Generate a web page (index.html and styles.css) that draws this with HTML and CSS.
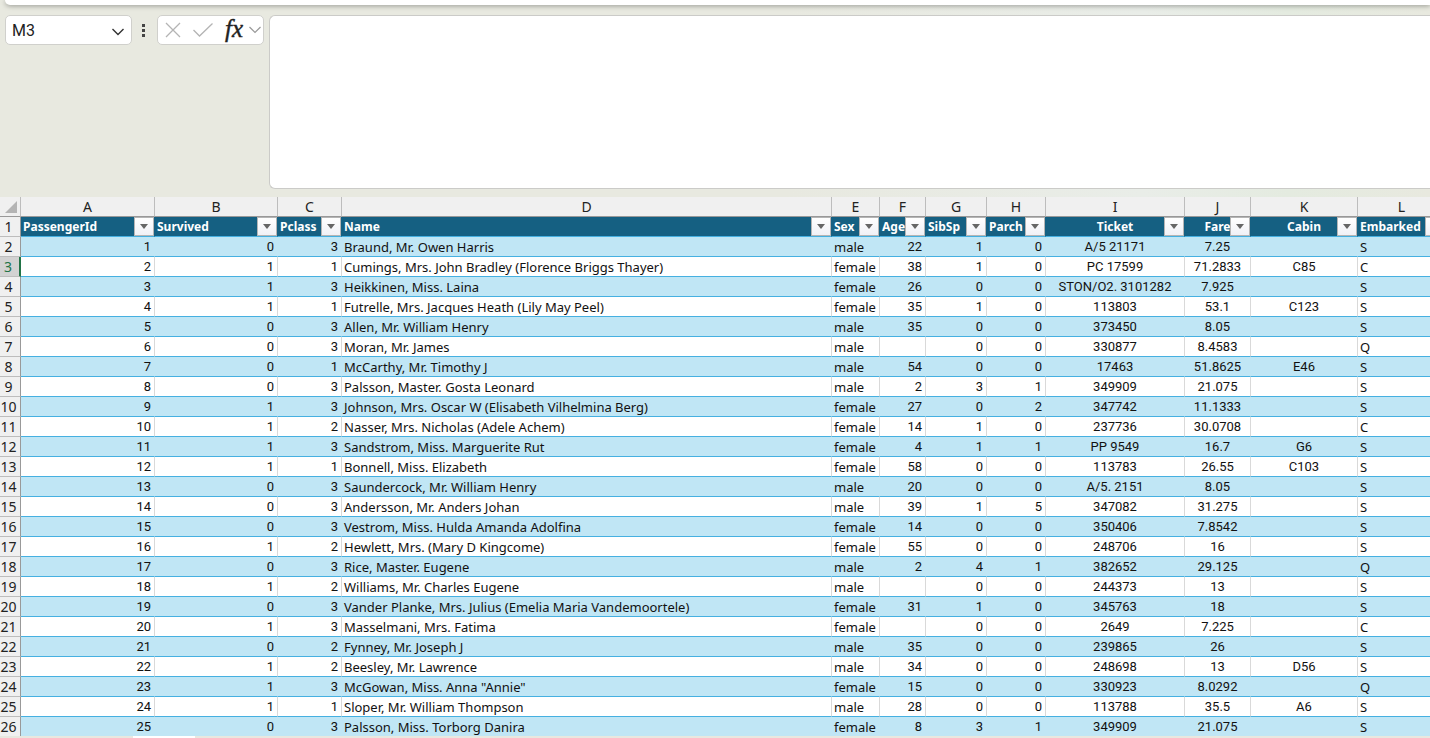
FILE: index.html
```html
<!DOCTYPE html>
<html lang="en">
<head>
<meta charset="utf-8">
<title>Passengers</title>
<link rel="stylesheet" href="styles.css">
</head>
<body>
<div class="ribbon"></div>
<header class="formula-bar">
  <div class="name-box">
    <input class="name-input" type="text" value="M3" aria-label="Name box">
    <button class="tool name-toggle" type="button" aria-label="Show names">
      <svg width="14" height="8" viewBox="0 0 14 8"><path d="M1.500 1 L7 6.500 L12.500 1" fill="none" stroke="#333" stroke-width="1.400"/></svg>
    </button>
  </div>
  <svg class="grip" width="4" height="14" viewBox="0 0 4 14"><path d="M0 0h3v3H0zM0 5h3v3H0zM0 10h3v3H0z" fill="#444"/></svg>
  <div class="actions">
    <button class="tool" type="button" aria-label="Cancel">
      <svg width="16" height="16" viewBox="0 0 16 16"><path d="M1 1 L15 15 M15 1 L1 15" fill="none" stroke="#b4b4b4" stroke-width="1.300"/></svg>
    </button>
    <button class="tool enter" type="button" aria-label="Enter">
      <svg width="20" height="14" viewBox="0 0 20 14"><path d="M0.500 7 L6.500 13 L19.500 0.500" fill="none" stroke="#b4b4b4" stroke-width="1.300"/></svg>
    </button>
    <button class="tool fx" type="button" aria-label="Insert function">fx</button>
    <button class="tool more" type="button" aria-label="More functions">
      <svg width="12" height="8" viewBox="0 0 12 8"><path d="M0.500 1 L6 6.500 L11.500 1" fill="none" stroke="#999" stroke-width="1.200"/></svg>
    </button>
  </div>
  <textarea class="formula" aria-label="Formula"></textarea>
</header>
<main class="grid">
  <table class="sheet">
    <colgroup>
      <col class="c-row"><col class="c-a"><col class="c-b"><col class="c-c"><col class="c-d"><col class="c-e"><col class="c-f"><col class="c-g"><col class="c-h"><col class="c-i"><col class="c-j"><col class="c-k"><col class="c-l">
    </colgroup>
    <thead><tr class="letters"></tr></thead>
    <tbody></tbody>
  </table>
</main>
<footer class="tabs"><div class="tab"></div></footer>
<script src="sheet.js"></script>
</body>
</html>
```
FILE: styles.css
```css
* { box-sizing: border-box; }
body {
  margin: 0;
  height: 100vh;
  display: flex;
  flex-direction: column;
  overflow: hidden;
  background: linear-gradient(90deg, #e8e9e0 0%, #e8e9e0 55%, #e9ede8 80%, #e4ebe0 90%, #e8e9df 100%);
  font-family: "Noto Sans", sans-serif;
  font-size: 13px;
  color: #111;
}
.ribbon {
  flex: none;
  height: 5px;
  margin-left: 5px;
  background: #fff;
  border-bottom-left-radius: 8px;
  box-shadow: 0 1px 5px rgba(0, 0, 0, 0.35);
}
.formula-bar {
  flex: none;
  display: flex;
  align-items: flex-start;
  padding: 10px 0 8px 5px;
}
.name-box, .actions {
  display: flex;
  align-items: center;
  height: 30px;
  background: #fff;
  border: 1px solid #d0d0cc;
  border-radius: 5px;
}
.name-box { width: 127px; padding: 0 6px; }
.name-input {
  flex: 1;
  min-width: 0;
  padding: 0;
  border: 0;
  outline: 0;
  font: 16px Roboto, sans-serif;
  color: #222;
}
.tool {
  display: flex;
  padding: 0;
  border: 0;
  background: none;
}
.name-toggle { padding-top: 3px; }
.grip { margin: 9px 11px 0 10px; }
.actions { width: 107px; padding: 0 2px 0 7px; }
.enter { margin-left: 12px; }
.fx {
  margin-left: 12px;
  padding-bottom: 3px;
  font: italic 25px/24px "Liberation Serif", serif;
  color: #222;
  -webkit-text-stroke: 0.4px #222;
}
.more { margin-left: auto; }
.formula {
  flex: 1;
  height: 174px;
  margin-left: 5px;
  border: 1px solid #cbcbc8;
  border-right: 0;
  border-radius: 6px 0 0 6px;
  background: #fff;
  resize: none;
  outline: 0;
}
.grid { flex: 1; min-height: 0; overflow: hidden; background: #fff; }
.sheet { table-layout: fixed; width: 1446px; border-collapse: separate; border-spacing: 0; }
.c-row { width: 21px; }
.c-a { width: 134px; }
.c-b { width: 123px; }
.c-c { width: 64px; }
.c-d { width: 490px; }
.c-e { width: 48px; }
.c-f { width: 46px; }
.c-g { width: 61px; }
.c-h { width: 59px; }
.c-i { width: 139px; }
.c-j { width: 66px; }
.c-k { width: 107px; }
.c-l { width: 88px; }
.sheet th, .sheet td {
  height: 20px;
  padding: 1px 2px 0;
  line-height: 18px;
  white-space: nowrap;
  overflow: hidden;
  text-align: left;
}
.sheet .letters th, .sheet .row-head {
  padding: 0;
  background: #f0f0f0;
  font: 14px/19px "Noto Sans", sans-serif;
  text-align: center;
  color: #222;
}
.sheet .letters th { border-right: 1px solid #bdbdbd; border-bottom: 1px solid #999; }
.sheet .row-head { padding: 0 3px 0 0; border-right: 1px solid #999; border-bottom: 1px solid #bdbdbd; }
.sheet .row-head span { display: flex; justify-content: center; }
.sheet .current { background: #d2d2d2; color: #217346; border-right: 2px solid #217346; }
.corner svg { display: block; margin: 2px 0 0 3px; }
.sheet td, .sheet .field { border-right: 1px solid #d9d9d9; border-bottom: 1px solid #45b0e1; }
.sheet .band td { background: #c0e6f5; border-right-color: #c0e6f5; }
.sheet .field {
  position: relative;
  background: #156082;
  border-right-color: #156082;
  color: #fff;
  font-size: 12px;
  font-weight: bold;
}
.sheet .num { padding-right: 3px; text-align: right; }
.sheet .mid { text-align: center; }
.sheet td.num, .sheet td.mid { font-family: Roboto, sans-serif; }
.filter {
  position: absolute;
  top: 0;
  right: 0;
  display: flex;
  align-items: center;
  justify-content: center;
  width: 20px;
  height: 19px;
  padding: 0;
  border: 1px solid #b5b5b5;
  background: linear-gradient(#fff, #f0f1f6);
}
.tabs { flex: none; height: 2px; background: #e8e8e0; }
.tab { width: 62px; height: 2px; margin-left: 133px; background: #fff; }
```
FILE: sheet.js
```js
const fields = ["PassengerId", "Survived", "Pclass", "Name", "Sex", "Age", "SibSp", "Parch", "Ticket", "Fare", "Cabin", "Embarked"];
const kinds = ["num", "num", "num", "", "", "num", "num", "num", "mid", "mid", "mid", ""];
const passengers = `0|3|Braund, Mr. Owen Harris|male|22|1|0|A/5 21171|7.25||S
1|1|Cumings, Mrs. John Bradley (Florence Briggs Thayer)|female|38|1|0|PC 17599|71.2833|C85|C
1|3|Heikkinen, Miss. Laina|female|26|0|0|STON/O2. 3101282|7.925||S
1|1|Futrelle, Mrs. Jacques Heath (Lily May Peel)|female|35|1|0|113803|53.1|C123|S
0|3|Allen, Mr. William Henry|male|35|0|0|373450|8.05||S
0|3|Moran, Mr. James|male||0|0|330877|8.4583||Q
0|1|McCarthy, Mr. Timothy J|male|54|0|0|17463|51.8625|E46|S
0|3|Palsson, Master. Gosta Leonard|male|2|3|1|349909|21.075||S
1|3|Johnson, Mrs. Oscar W (Elisabeth Vilhelmina Berg)|female|27|0|2|347742|11.1333||S
1|2|Nasser, Mrs. Nicholas (Adele Achem)|female|14|1|0|237736|30.0708||C
1|3|Sandstrom, Miss. Marguerite Rut|female|4|1|1|PP 9549|16.7|G6|S
1|1|Bonnell, Miss. Elizabeth|female|58|0|0|113783|26.55|C103|S
0|3|Saundercock, Mr. William Henry|male|20|0|0|A/5. 2151|8.05||S
0|3|Andersson, Mr. Anders Johan|male|39|1|5|347082|31.275||S
0|3|Vestrom, Miss. Hulda Amanda Adolfina|female|14|0|0|350406|7.8542||S
1|2|Hewlett, Mrs. (Mary D Kingcome)|female|55|0|0|248706|16||S
0|3|Rice, Master. Eugene|male|2|4|1|382652|29.125||Q
1|2|Williams, Mr. Charles Eugene|male||0|0|244373|13||S
0|3|Vander Planke, Mrs. Julius (Emelia Maria Vandemoortele)|female|31|1|0|345763|18||S
1|3|Masselmani, Mrs. Fatima|female||0|0|2649|7.225||C
0|2|Fynney, Mr. Joseph J|male|35|0|0|239865|26||S
1|2|Beesley, Mr. Lawrence|male|34|0|0|248698|13|D56|S
1|3|McGowan, Miss. Anna "Annie"|female|15|0|0|330923|8.0292||Q
1|1|Sloper, Mr. William Thompson|male|28|0|0|113788|35.5|A6|S
0|3|Palsson, Miss. Torborg Danira|female|8|3|1|349909|21.075||S`.split("\n");

document.querySelector(".letters").innerHTML =
  '<th class="corner" aria-label="Select all"><svg width="14" height="13" viewBox="0 0 14 13"><path d="M14 0V12H2Z" fill="#b4b4b4"/></svg></th>' +
  [..."ABCDEFGHIJKL"].map(c => `<th scope="col">${c}</th>`).join("");

const arrow = '<svg width="8" height="5" viewBox="0 0 8 5"><path d="M0 0H8L4 5Z" fill="#666"/></svg>';
const rowHead = n => `<th scope="row" class="row-head${n === 3 ? " current" : ""}"><span>${n}</span></th>`;

let html = "<tr>" + rowHead(1) + fields.map((f, i) =>
  `<th class="field ${kinds[i] === "mid" ? "mid" : ""}">${f}<button class="filter" type="button" aria-label="Filter ${f}">${arrow}</button></th>`).join("") + "</tr>";
passengers.forEach((line, i) => {
  const cells = [i + 1, ...line.split("|")];
  html += `<tr class="${i % 2 ? "" : "band"}">` + rowHead(i + 2) +
    cells.map((v, k) => `<td class="${kinds[k]}">${v}</td>`).join("") + "</tr>";
});
document.querySelector("tbody").innerHTML = html;
```
